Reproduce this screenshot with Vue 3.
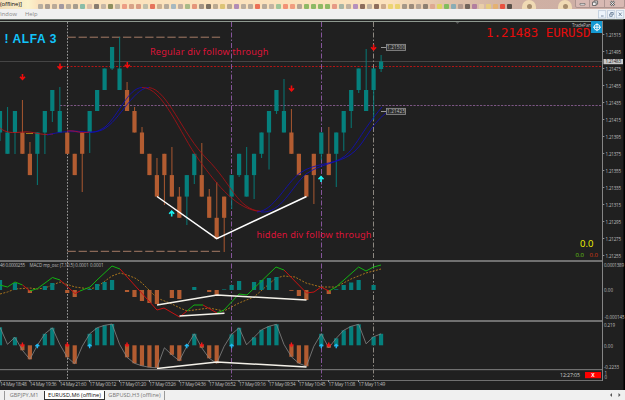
<script setup>
const step = 7.472
const cx = (i) => i * step
const levels = [47, 68.5, 90, 111, 132.5, 153.8, 175.1, 196.6, 217.8, 239]
// [colour, body level, wick top, wick bottom]
const raw = [
  ['t', 3, 0, 141], ['t', 4, 107, 0], ['t', 3, 0, 154], ['o', 4, 100, 0], ['o', 5, 142, 0],
  ['t', 4, 0, 185], ['t', 3, 0, 154], ['t', 2, 0, 122], ['t', 3, 87, 0], ['o', 4, 0, 0],
  ['o', 5, 0, 0], ['o', 4, 0, 192], ['t', 3, 0, 153], ['t', 2, 0, 0], ['t', 1, 0, 0],
  ['t', 0, 0, 70], ['t', 1, 37, 0], ['o', 2, 82, 0], ['o', 3, 107, 0], ['o', 4, 127, 0],
  ['o', 5, 0, 0], ['o', 6, 158, 0], ['o', 5, 0, 205], ['o', 6, 147, 0], ['o', 7, 187, 0],
  ['t', 6, 0, 225], ['t', 5, 0, 184], ['o', 6, 143, 0], ['o', 7, 189, 0], ['o', 8, 182, 0],
  ['o', 7, 0, 252], ['t', 6, 0, 209], ['t', 5, 0, 177], ['t', 6, 147, 0], ['t', 5, 0, 199],
  ['t', 4, 0, 158], ['t', 3, 0, 169.5], ['t', 2, 0, 114], ['t', 3, 79, 0], ['o', 4, 109, 0],
  ['o', 5, 0, 0], ['o', 6, 0, 0], ['o', 5, 0, 204], ['t', 4, 0, 160], ['o', 5, 127, 0],
  ['t', 4, 0, 187], ['t', 3, 0, 151], ['t', 2, 0, 128], ['t', 1, 0, 93], ['t', 2, 49, 0],
  ['t', 1, 0, 120],
]
const candles = raw.map(([c, l, wt, wb], i) => {
  const top = levels[l]
  const bottom = levels[l + 1]
  return { c, x: cx(i), top, bottom, wt: wt || top, wb: wb || bottom }
})
candles.push({ c: 't', x: cx(51), top: 61.5, bottom: 69, wt: 55, wb: 72 })

const macd = [10, 0, 7, 0, -3, 0, 4, 7, 0, -3, -7, 0, 1, 6, 8, 10, 0, -2, -7, -11, -13, -14, 0, -8, -9, 0, 3, 0, -2, -5, 0.6, 5, 9, 0, 8, 10, 12, 13, 0, -0.8, -6, -10, 0, 0, -4, 0.7, 5, 7.5, 10, 0, 5, 0]
const osc = [18, 0, 8, -5, -14, 0, 11.5, 17.5, 0, -12, -18.5, 0, 11.5, 17.5, 20, 21.3, 0, -12, -18, -20.5, -22, -22.5, 0, -9.5, -15.5, 0, 11.5, -2.5, -13, -18, 0, 11, 17.5, 0, 8, 15.5, 19, 21, 0, -11.5, -18, -21, 0, 11.5, -2.5, 7, 15, 19, 21, 0, 8.5, 11.5]
const bars = (vals, zero) =>
  vals.map((v, i) => ({ v, x: cx(i), y: v > 0 ? zero - v : zero, h: Math.abs(v) })).filter((b) => b.v)
const macdBars = bars(macd, 290)
const oscBars = bars(osc, 345.3)
const rest = { 1: 1, 8: 1, 11: -1, 16: 1, 22: -2.5, 25: -1, 30: -1, 33: 0.5, 38: 1, 42: -1, 49: 1.5 }
const oscLine = osc.map((v, i) => `${cx(i)},${345.3 - (v || rest[i] || 0)}`).join(' ')

const prices = ['1.21515', '1.21495', '1.21475', '1.21455', '1.21435', '1.21415', '1.21395', '1.21375', '1.21355', '1.21335', '1.21315', '1.21295', '1.21275', '1.21255']
const scale = prices.map((t, i) => ({ t, y: 34.6 + i * 17 }))

const downs = [[22.5, 77], [60, 66.5], [127.3, 65], [291.5, 88.5], [373.6, 47.5]]
const ups = [[171.7, 213.5], [321, 179]]
const oscDown = [3, 9, 17, 27, 39, 44]
const oscUp = [5, 12, 25, 31, 43, 45]
const times = ['14 May 18:48', '14 May 19:36', '14 May 21:60', '17 May 00:12', '17 May 01:20', '17 May 03:26', '17 May 04:36', '17 May 06:52', '17 May 09:16', '17 May 09:34', '17 May 10:45', '17 May 11:08', '17 May 11:49']
const favicons = ['#a7a09a', '#988d86', '#a99b90', '#8d8799', '#aaa095', '#918b83', '#6fb3a4', '#d7b7a3', '#6c625d', '#b8aca0', '#737b48', '#b2a89b', '#e98c76', '#cf937c', '#d18c78', '#b1b6a6', '#e15945', '#c1a589', '#a49d94', '#93afc1', '#b2a299', '#95b17a', '#e0826a', '#8b7f75', '#5c544c', '#ac9d88', '#d5bd65', '#a99c8c', '#a078b5', '#aaa096', '#a89d91', '#e8563e', '#a69d92', '#b4a99d', '#8abf91', '#f07f65', '#ef8c72', '#a4978d', '#75af50', '#75af50', '#75af50', '#75af50', '#e18778', '#94aaa0', '#b2a69a', '#a67dbd', '#735246', '#b3a79b', '#735246', '#c19e82', '#e9d160', '#e8d05c', '#93887d', '#87796d', '#a7998d', '#776c62', '#dca28b', '#dfd94f', '#6bbc4c', '#75a8b8', '#a99188', '#594f4a', '#a96f9e', '#ecd3aa', '#ead077', '#e8b066', '#ed3926', '#3c3732']
</script>

<template>
  <div class="window">
    <header class="titlebar">
      <span class="caption">(offline)]</span>
      <div class="favicons">
        <i v-for="(c, i) in favicons" :key="i" :style="{ background: c }"></i>
      </div>
      <span class="halo"><b></b></span>
      <span class="halo second"><b></b></span>
      <svg class="controls" width="50" height="8" viewBox="0 0 50 8">
        <path d="M.5 0V6Q.5 7.5 2 7.5H48Q49.5 7.5 49.5 6V0M14.5 0V7M29.5 0V7" fill="#d8b9b3" stroke="#a58d89" stroke-width=".8" />
        <path d="M5 3.5h5v1.5h-5z" fill="#fff" stroke="#555" stroke-width=".6" />
        <path d="M17.5 2.2h3.6v3.3h-3.6zM19 2V.9h3.6v3.3H21.3" fill="#eee" stroke="#555" stroke-width=".8" />
        <path d="M35.5 1.2l4 4.5m0-4.5l-4 4.5" stroke="#555" stroke-width="2" />
        <path d="M35.5 1.2l4 4.5m0-4.5l-4 4.5" stroke="#fff" stroke-width=".8" />
      </svg>
    </header>
    <nav class="menu">
      <span class="window-item">Window</span><span>Help</span>
      <svg width="28" height="9" viewBox="0 0 28 9">
        <g fill="#edf4fb" stroke="#b5c5d8" stroke-width=".7">
          <rect x="1.5" y=".7" width="7.3" height="7.3" /><rect x="10.5" y=".7" width="7.3" height="7.3" /><rect x="19.5" y=".7" width="7.3" height="7.3" />
        </g>
        <path d="M4 6h2.6M12.7 4h2.5v2.3h-2.5zM13.7 3.8V2.5h2.5V5M21.7 2.6l3 3.4m0-3.4l-3 3.4" fill="none" stroke="#60758e" stroke-width=".8" />
      </svg>
    </nav>

    <svg class="chart" width="625" height="371" viewBox="0 19 625 371">
      <rect y="19" width="624" height="371" fill="#202020" />
      <rect y="19" width="625" height="1" fill="#66706a" />
      <rect y="20" width="624" height="1" fill="#222" />
      <rect y="21" width="603" height="1" fill="#8e988f" />
      <rect x="623.5" y="19" width="1.5" height="371" fill="#000" />

      <path d="M0 61.5H603" stroke="#454545" />
      <path d="M60 66.5H603" stroke="#b21414" stroke-dasharray="2 1.5" />
      <path d="M60 105.5H603" stroke="#7c5684" stroke-dasharray="2.2 1.3" />
      <path d="M67.5 22V380" stroke="#999" stroke-dasharray="1.7 1.5" />
      <g stroke-dasharray="5 2 1.5 2">
        <path d="M231.5 22V380M321.5 22V380" stroke="#85559a" />
        <path d="M373.5 22V380" stroke="#8c8780" />
      </g>
      <path d="M67.5 37.2H222M67.5 251.3H222" stroke="#a57b66" stroke-dasharray="8.3 2.8" />

      <g v-for="(k, i) in candles" :key="'c' + i" :class="k.c">
        <rect :x="k.x - .5" :y="k.wt" width="1.1" :height="k.wb - k.wt" opacity=".85" />
        <rect :x="k.x - 2.1" :y="k.top" width="4.2" :height="k.bottom - k.top" />
      </g>

      <g fill="none" stroke-width=".85">
        <path d="M0 128C6 133 12 133 23 132S40 136 53 134" stroke="#c01218" />
        <path d="M47 135C60 132 65 131 80 132S97 132 105 127C119 115 128 88 142 87.5" stroke="#100eb8" />
        <path d="M68 131C76 130 90 134 99 131C117 127 132 88 149 87.5" stroke="#100eb8" />
        <path d="M67 131C76 130 80 134 90 132" stroke="#c01218" />
        <path d="M26 133.5h7" stroke="#b58a17" />
        <path d="M142 87.5C163 87 180 134 199 160S237 210 261 211.5" stroke="#a81015" />
        <path d="M149 87.5C168 90 182 134 207 159S237 209 261 211.5" stroke="#a81015" />
        <path d="M257 212C274 211 286 183 300 173C316 162 332 166 345 156C356 147 361 132 382 107" stroke="#100eb8" />
        <path d="M261 212C281 214 292 186 306 174C320 164 338 163 350 155C365 145 368 127 387 112" stroke="#100eb8" />
      </g>
      <path d="M157 196.5L216.7 238.6L306.5 196.5" fill="none" stroke="#fff" stroke-width="1.5" />

      <path v-for="(a, i) in downs" :key="'d' + i" :transform="`translate(${a[0]} ${a[1]})`" d="M0-3V2M-2.5-.3L0 2.3L2.5-.3" fill="none" stroke="#f00c0c" stroke-width="1.6" />
      <path v-for="(a, i) in ups" :key="'u' + i" :transform="`translate(${a[0]} ${a[1]})`" d="M0 3V-2M-2.5 .3L0-2.3L2.5 .3" fill="none" stroke="#18f0f0" stroke-width="1.6" />

      <text x="4.5" y="42.5" class="brand" textLength="52">! ALFA 3</text>
      <text x="150" y="55" class="note" textLength="118.5">Regular div follow through</text>
      <text x="256.5" y="238" class="note" textLength="115">hidden div follow through</text>
      <text x="486" y="37" class="quote" textLength="104.5" lengthAdjust="spacingAndGlyphs">1.21483 EURUSD</text>
      <text x="572" y="26.8" class="tiny" textLength="19">TradePan</text>
      <path d="M455.5 22h4l-2 2z" fill="#555" />
      <rect x="591" y="21" width="12" height="12" fill="#1499d2" />
      <path d="M597 23.2v8M593 27.2h8" stroke="#fff" stroke-width=".9" />
      <circle cx="597" cy="27.2" r="2.9" fill="none" stroke="#fff" stroke-width=".9" />

      <g>
        <path d="M381 47.5H386M381 111.5H386" stroke="#999" />
        <rect x="386.5" y="44.4" width="19" height="6" fill="#303030" stroke="#8b8b8b" stroke-width=".9" />
        <rect x="386.5" y="108.4" width="19" height="6" fill="#303030" stroke="#8b8b8b" stroke-width=".9" />
        <text x="387" y="49.3" class="tiny" textLength="18">1.21500</text>
        <text x="387" y="113.3" class="tiny" textLength="18">1.21425</text>
      </g>
      <text x="580" y="246.5" class="big-num">0.0</text>
      <text x="575.5" y="256.7" class="small-num green">0.0</text>
      <text x="589.5" y="256.7" class="small-num orange">0.0</text>

      <path d="M0 294L7.5 292L15 289L30 288L37 289L45 288L60 282L75 287L90 289L97 287L105 281L112 276L120 273L127 275L135 278L142 283L157 298L172 304L180 308L187 311L209 308L224 311L239 303L254 297L262 290L276 278L284 276L295 277L306 283L321 287L336 287L351 279L366 273L381 269" fill="none" stroke="#a6731c" stroke-dasharray="2 1.4" />
      <g v-for="(b, i) in macdBars" :key="'m' + i" :class="b.v > 0 ? 't' : 'o'">
        <rect :x="b.x - 2.1" :y="b.y" width="4.2" :height="b.h" />
      </g>
      <g fill="none" stroke-width="1">
        <path d="M0 285L7.5 287L15 282L22.5 285M30 291L37.5 288.5L45 283L52.5 277.5L60 280M80 291L90 287L97 280L112 266L120 269M187 311L194 305L203 305M217 313L224 310L239 294L247 295L276 267L284 270M329 291L336 287L358.6 267L366 271L373.5 267L381 265" stroke="#12b312" />
        <path d="M22.5 285L30 291M60 280L75 293.5L80 291M120 269L157 310L164 308L179.5 317L187 311M203 305L217 313M284 270L306.5 293L314 292L321 287L329 291" stroke="#c81212" />
      </g>
      <path d="M157 305L217 295L306.5 300M179.5 316L224.5 313.3" fill="none" stroke="#f4f1e9" stroke-width="1.5" />
      <g v-for="(b, i) in oscBars" :key="'o' + i" :class="b.v > 0 ? 't' : 'o'">
        <rect :x="b.x - 2.1" :y="b.y" width="4.2" :height="b.h" />
      </g>
      <polyline :points="oscLine" fill="none" stroke="#858585" stroke-width=".8" />
      <path v-for="i in oscDown" :key="'od' + i" :transform="`translate(${cx(i)} 345)`" d="M0-2.5V1M-2-.5L0 1.3L2-.5" fill="none" stroke="#f01818" stroke-width="1.4" />
      <path v-for="i in oscUp" :key="'ou' + i" :transform="`translate(${cx(i)} 345.7)`" d="M0 2.5V-1M-2 .5L0-1.3L2 .5" fill="none" stroke="#20b8f0" stroke-width="1.4" />
      <path d="M157 368.6L217 362L306.5 367" fill="none" stroke="#f4f1e9" stroke-width="1.5" />

      <g fill="#707070">
        <rect y="260" width="603" height="2" /><rect y="320" width="603" height="2" />
        <rect y="369" width="603" height="1.2" /><rect y="380" width="603" height="1" />
        <rect x="602" y="21" width="1" height="360" fill="#858585" />
      </g>
      <text x="0" y="267.3" class="tiny" textLength="25">46 0.0000255</text>
      <text x="29.5" y="267.3" class="tiny" textLength="74">MACD mp_osc (7,10,5) 0.0001 0.0001</text>

      <g v-for="s in scale" :key="s.t">
        <rect x="603" :y="s.y - .4" width="1.3" height=".8" fill="#aaa" />
        <text x="605.5" :y="s.y + 2" class="tiny" textLength="15.5">{{ s.t }}</text>
      </g>
      <rect x="603.5" y="59" width="19.5" height="5.2" fill="#c9c9c9" />
      <text x="605.5" y="63.4" class="tiny dark" textLength="15.5">1.21483</text>
      <text x="604" y="266.5" class="tiny" textLength="20">0.0001389</text>
      <text x="604" y="292" class="tiny" textLength="9">0.00</text>
      <text x="604.5" y="319" class="tiny" textLength="20">-0.000145</text>
      <text x="604" y="326.5" class="tiny" textLength="11">0.219</text>
      <text x="604" y="347.5" class="tiny" textLength="9">0.00</text>
      <text x="604" y="368.7" class="tiny" textLength="15">-0.2233</text>
      <text x="604.5" y="374.7" class="tiny">1</text>
      <text x="604.5" y="379.2" class="tiny">0</text>
      <text x="560" y="377.3" class="clock" textLength="20">12:27:05</text>
      <rect x="585" y="372" width="16" height="6.2" fill="#f00" />
      <text x="591.2" y="377" class="close">X</text>
      <g v-for="(t, i) in times" :key="t">
        <rect :x="i * 29.87 - .4" y="380" width=".9" height="2" fill="#aaa" />
        <text :x="i * 29.87" y="386.2" class="tiny time" textLength="26.8">{{ t }}</text>
      </g>
    </svg>

    <footer class="tabs">
      <span class="tab first">GBPJPY,M1</span>
      <span class="tab active">EURUSD,M6 (offline)</span>
      <span class="tab last">GBPUSD,H3 (offline)</span>
      <svg width="16" height="10" viewBox="0 0 16 10">
        <path d="M3 3v4l-2-2zM9.5 3v4l2-2z" fill="#555" />
      </svg>
    </footer>
  </div>
</template>

<style>
body { margin: 0; overflow: hidden; }
</style>
<style scoped>
.window { width: 625px; height: 400px; overflow: hidden; display: flex; flex-direction: column; font-family: "Open Sans", "Noto Sans", sans-serif; background: #f0f0f0; }
.titlebar { height: 9px; flex: none; display: flex; align-items: flex-start; background: linear-gradient(90deg, #fbe2bd 0 390px, #e3c5ac 440px, #cfb0a3 520px, #cdaea6); overflow: hidden; }
.caption { width: 38px; font-size: 6px; line-height: 9px; color: #111; flex: none; background: linear-gradient(90deg, #f3dcb8, #fbf3cc 28px, #fbe2bd); white-space: nowrap; letter-spacing: -.15px; }
.favicons { width: 475px; flex: none; height: 9px; display: flex; justify-content: space-between; align-items: flex-end; }
.favicons i { width: 5px; height: 5px; border-radius: 1px; filter: blur(.7px); opacity: .8; }
.halo { width: 14px; height: 9px; margin-left: 9px; border-radius: 7px 7px 0 0; background: #f0dab4; display: flex; align-items: flex-end; justify-content: center; flex: none; }
.halo b { width: 5px; height: 5px; border-radius: 50%; background: #a68d6e; filter: blur(.7px); }
.halo.second { margin-left: 22px; }
.controls { margin-left: auto; flex: none; }
.menu { height: 10px; flex: none; display: flex; align-items: center; font-size: 5.8px; line-height: 10px; color: #888; background: #f0f0f0; }
.window-item { width: 25px; margin-left: -5px; margin-right: 5px; }
.menu svg { margin-left: auto; }
.chart { display: block; flex: none; }
.t { fill: #05807d; }
.o { fill: #b35c31; }
text { font-family: "Open Sans", "Noto Sans", sans-serif; }
.brand { font: bold 12px "Liberation Sans", sans-serif; fill: #12c4fa; }
.note { font-family: "Noto Sans", sans-serif; font-size: 9.2px; fill: #dc1439; }
.quote { font: 13px "DejaVu Sans Mono", monospace; fill: #e60b0b; }
.tiny { font-size: 4.5px; fill: #bdbdbd; }
.time { font-size: 4.9px; }
.dark { fill: #222; }
.big-num { font-size: 9.5px; fill: #f5f500; }
.small-num { font-size: 6px; }
.green { fill: #66cc12; }
.orange { fill: #d83a12; }
.clock { font-size: 5.3px; fill: #ccc; }
.close { font-size: 5px; font-weight: bold; fill: #fff; }
.tabs { height: 10px; flex: none; display: flex; align-items: center; font-size: 5.6px; line-height: 9px; color: #777; background: #f0f0f0; white-space: nowrap; }
.tab { text-align: center; box-sizing: border-box; height: 9px; }
.first { width: 39px; margin-left: 4px; border-left: 1px solid #999; }
.active { width: 61px; color: #111; background: #fff; border: 1px solid #333; border-top: 0; line-height: 8px; margin-left: 1px; }
.last { width: 60px; border-right: 1px solid #999; }
.tabs svg { margin-left: auto; }
</style>
